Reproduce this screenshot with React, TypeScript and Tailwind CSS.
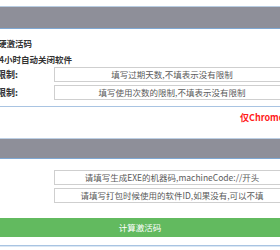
import React from "react";

const font = { fontFamily: '"Noto Sans CJK SC", "Noto Sans", sans-serif' };

function Field({ label, placeholder }: { label?: string; placeholder: string }) {
  return (
    <div className="flex items-center h-[15px]">
      <div className="w-[57px] shrink-0 -ml-[3px] text-[9px] font-bold text-[#333] leading-none whitespace-nowrap">
        {label}
      </div>
      <div className="w-[236px] shrink-0 h-[15px] border border-[#cfcfcf] bg-white flex items-center justify-center text-[8.5px] text-[#5a5a5a] leading-none whitespace-nowrap">
        {placeholder}
      </div>
    </div>
  );
}

export default function App() {
  return (
    <div className="w-[280px] h-[250px] overflow-hidden bg-white" style={font}>
      <div className="h-[6px]" />
      <div className="h-[23px] bg-[#8e8f99] border-t border-t-[#b9cde2] border-b border-b-[#7fa8d3]" />
      <div className="pt-[6px] pb-[6px] border-b border-b-[#a9c4e2]">
        <div className="h-[16px] flex items-center -ml-[2px] text-[8.5px] font-bold text-[#333] whitespace-nowrap">
          硬激活码
        </div>
        <div className="h-[16px] flex items-center -ml-[1px] text-[8.5px] font-bold text-[#333] whitespace-nowrap">
          4小时自动关闭软件
        </div>
        <div className="flex flex-col gap-[3px]">
          <Field label="限制:" placeholder="填写过期天数,不填表示没有限制" />
          <Field label="限制:" placeholder="填写使用次数的限制,不填表示没有限制" />
        </div>
      </div>
      <div className="h-[31px] pt-[3px] pl-[240px]">
        <div className="h-[14px] flex items-center text-[9px] font-bold text-[#ff1a1a] whitespace-nowrap leading-none">仅Chrome浏览器有效</div>
      </div>
      <div className="h-[21px] bg-[#8e8f99] border-t border-t-[#bccfe4] border-b border-b-[#7fa8d3]" />
      <div className="pt-[11px] flex flex-col gap-[3px]">
        <Field placeholder="请填写生成EXE的机器码,machineCode://开头" />
        <Field placeholder="请填写打包时候使用的软件ID,如果没有,可以不填" />
      </div>
      <div className="mt-[15px] h-[19px] bg-[#62ba5f] flex items-center justify-center text-white text-[8.5px] leading-none">
        计算激活码
      </div>
      <div className="mt-[8px] h-[2px] border-t border-t-[#a9c4e2] bg-[#dbe7f4]" />
    </div>
  );
}
